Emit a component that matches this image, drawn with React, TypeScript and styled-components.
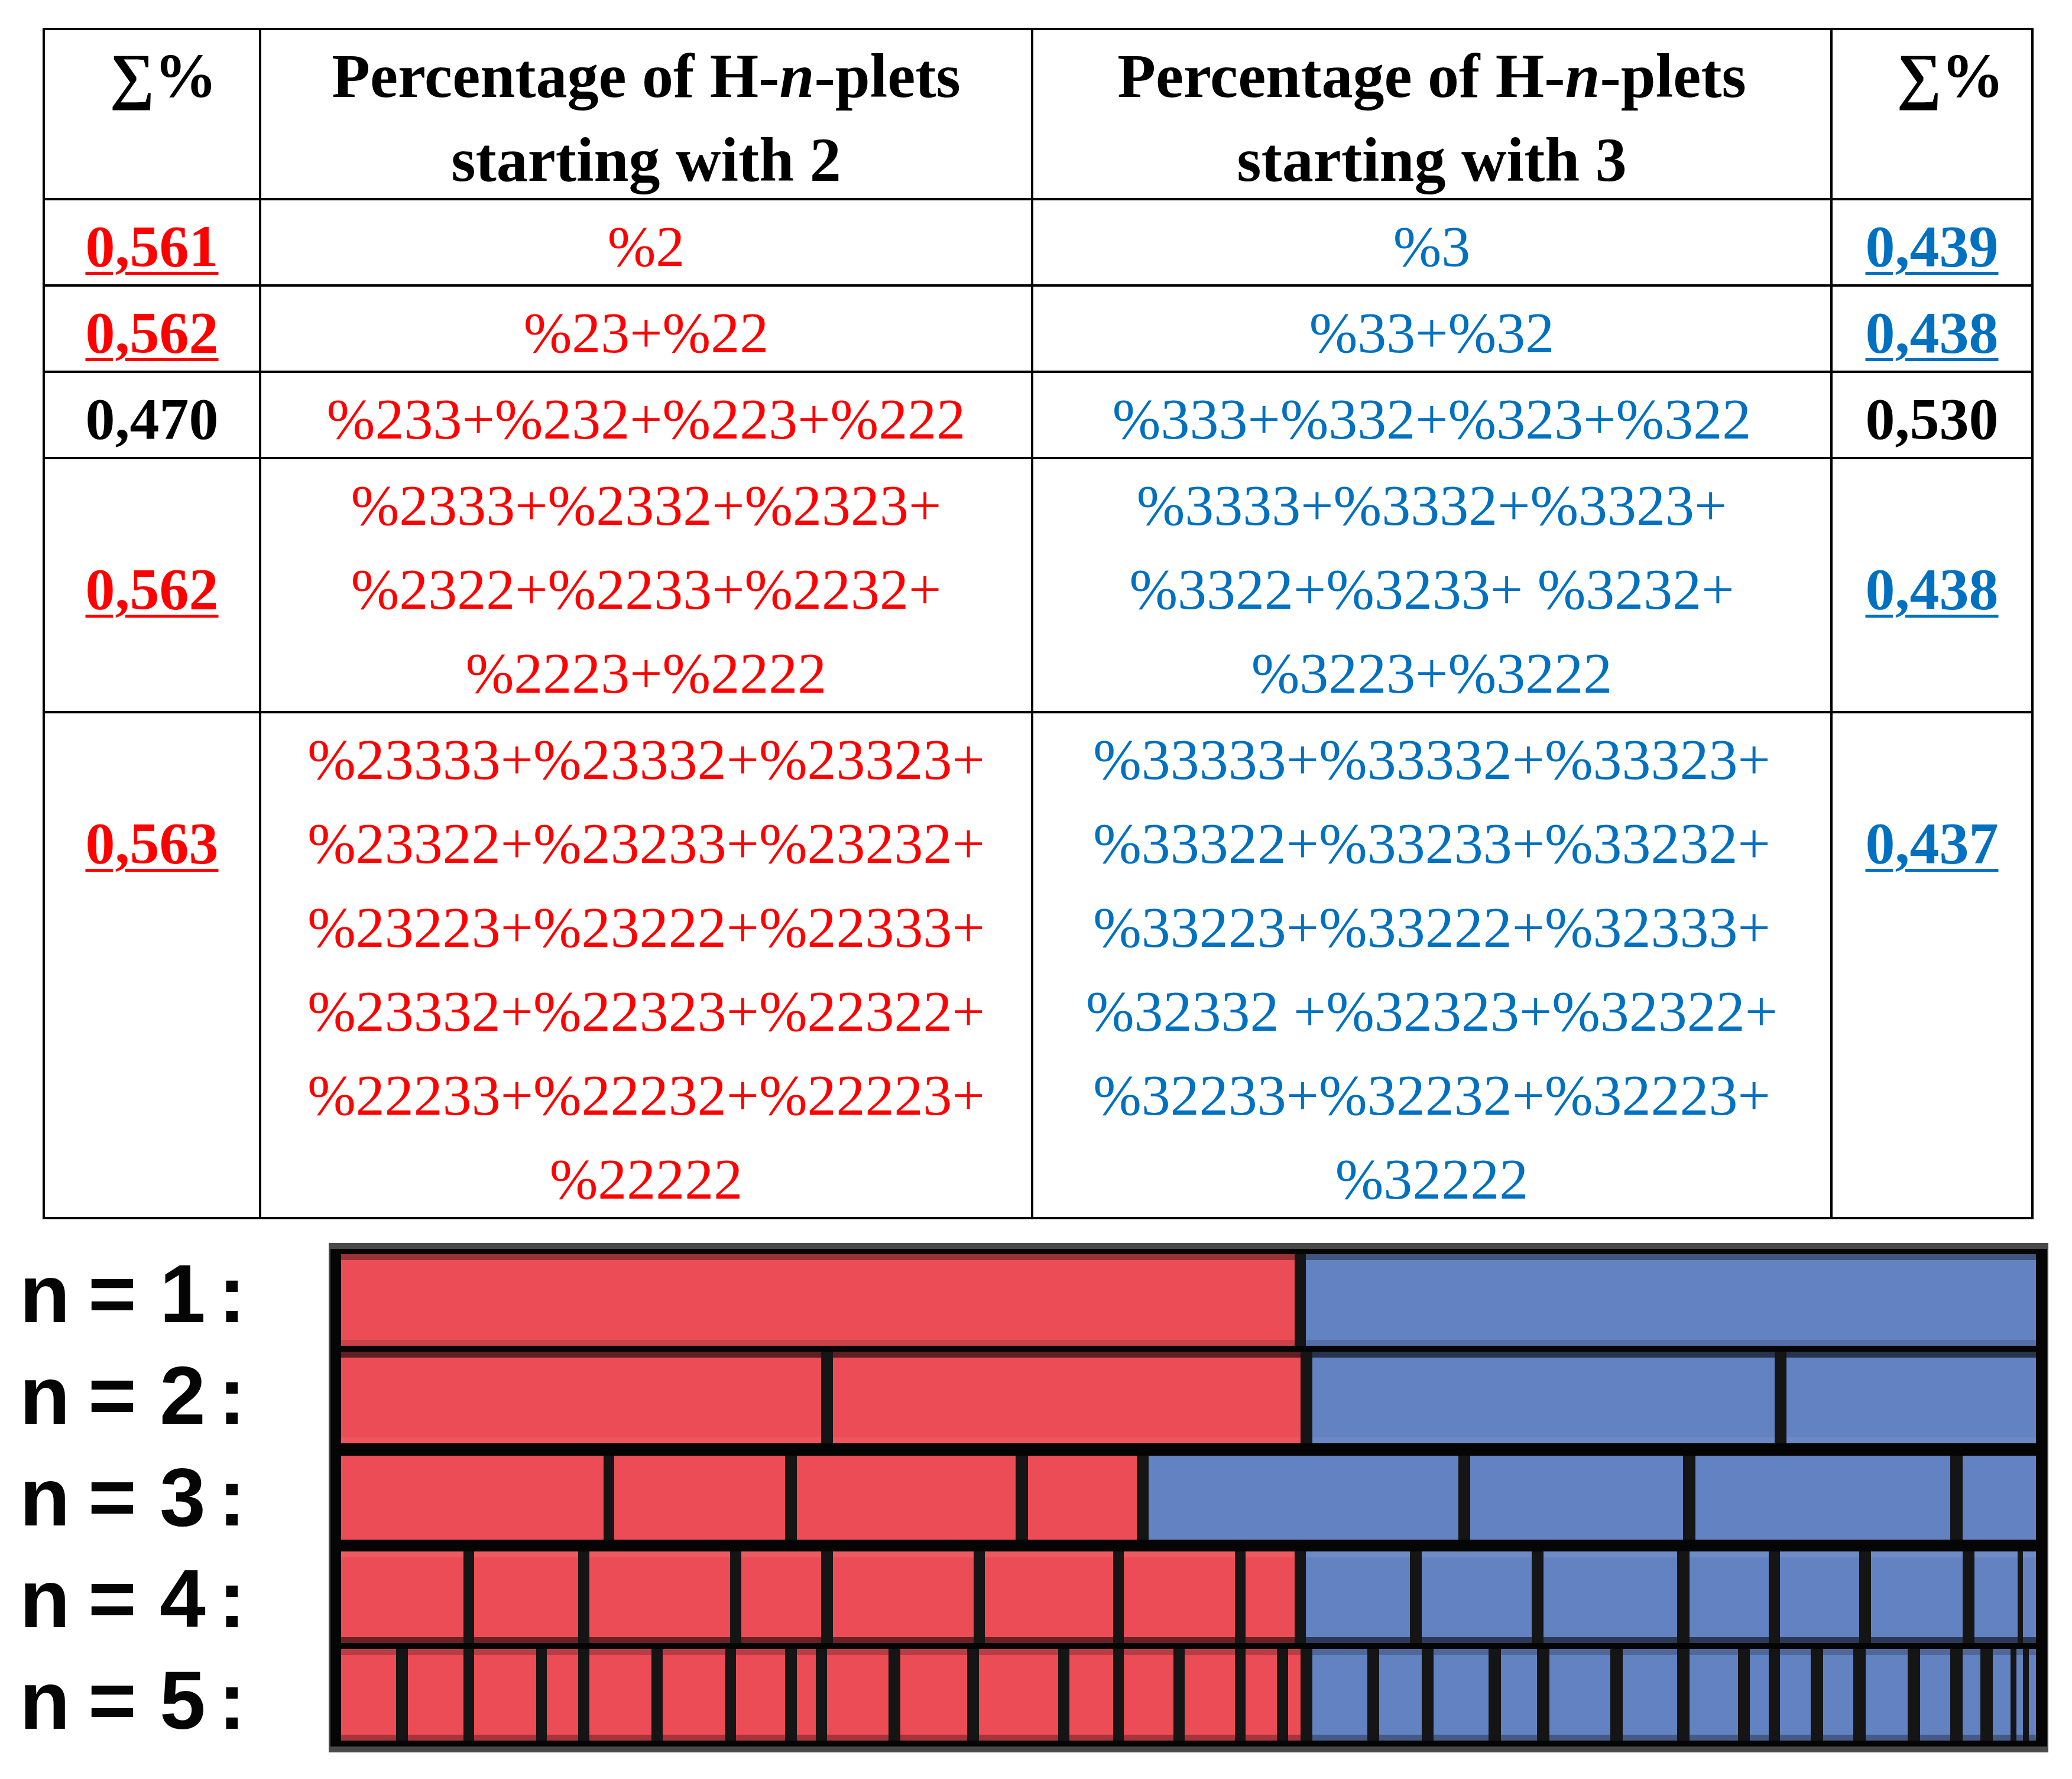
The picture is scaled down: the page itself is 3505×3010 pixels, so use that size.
import React from "react";
import styled, { createGlobalStyle } from "styled-components";

const RED = "#ff0000";
const BLUE = "#0070c0";
const BAR_RED = "#ec4c55";
const BAR_BLUE = "#6382c2";
const LINE = 142;

interface Total {
  value: string;
  color: string;
  underline?: boolean;
}

interface TableRow {
  left: Total;
  right: Total;
  twos: string[];
  threes: string[];
  lead?: number;
}

const rows: TableRow[] = [
  {
    left: { value: "0,561", color: RED, underline: true },
    right: { value: "0,439", color: BLUE, underline: true },
    twos: ["%2"],
    threes: ["%3"],
  },
  {
    left: { value: "0,562", color: RED, underline: true },
    right: { value: "0,438", color: BLUE, underline: true },
    twos: ["%23+%22"],
    threes: ["%33+%32"],
  },
  {
    left: { value: "0,470", color: "#000" },
    right: { value: "0,530", color: "#000" },
    twos: ["%233+%232+%223+%222"],
    threes: ["%333+%332+%323+%322"],
  },
  {
    left: { value: "0,562", color: RED, underline: true },
    right: { value: "0,438", color: BLUE, underline: true },
    twos: ["%2333+%2332+%2323+", "%2322+%2233+%2232+", "%2223+%2222"],
    threes: ["%3333+%3332+%3323+", "%3322+%3233+ %3232+", "%3223+%3222"],
    lead: 1,
  },
  {
    left: { value: "0,563", color: RED, underline: true },
    right: { value: "0,437", color: BLUE, underline: true },
    twos: [
      "%23333+%23332+%23323+",
      "%23322+%23233+%23232+",
      "%23223+%23222+%22333+",
      "%23332+%22323+%22322+",
      "%22233+%22232+%22223+",
      "%22222",
    ],
    threes: [
      "%33333+%33332+%33323+",
      "%33322+%33233+%33232+",
      "%33223+%33222+%32333+",
      "%32332 +%32323+%32322+",
      "%32233+%32232+%32223+",
      "%32222",
    ],
    lead: 1,
  },
];

// bar chart: segment edges in page pixels, inner area starts at 577
type Seg = [number, number, "r" | "b"];

interface BarRowData {
  height: number;
  sep: number;
  top: string;
  bottom: string;
  segs: Seg[];
}

const r = (a: number, b: number): Seg => [a, b, "r"];
const b = (a: number, c: number): Seg => [a, c, "b"];

const bars: BarRowData[] = [
  {
    height: 155,
    sep: 0,
    top: "rgba(0,0,0,0.35)",
    bottom: "rgba(0,0,0,0.14)",
    segs: [r(577, 2190), b(2209, 3444)],
  },
  {
    height: 155,
    sep: 10,
    top: "rgba(0,0,0,0.6)",
    bottom: "rgba(255,255,255,0.06)",
    segs: [r(577, 1389), r(1409, 2200), b(2220, 3002), b(3022, 3444)],
  },
  {
    height: 142,
    sep: 21,
    top: "rgba(0,0,0,0)",
    bottom: "rgba(0,0,0,0)",
    segs: [
      r(577, 1021), r(1039, 1328), r(1348, 1718), r(1739, 1923),
      b(1943, 2467), b(2487, 2847), b(2868, 3299), b(3320, 3444),
    ],
  },
  {
    height: 155,
    sep: 20,
    top: "rgba(255,255,255,0.08)",
    bottom: "rgba(0,0,0,0.55)",
    segs: [
      r(577, 784), r(802, 978), r(997, 1235), r(1254, 1389),
      r(1409, 1647), r(1666, 1883), r(1901, 2089), r(2107, 2190),
      b(2209, 2385), b(2405, 2591), b(2611, 2837), b(2858, 2992),
      b(3011, 3145), b(3165, 3320), b(3340, 3413), b(3422, 3444),
    ],
  },
  {
    height: 155,
    sep: 10,
    top: "rgba(0,0,0,0.2)",
    bottom: "rgba(0,0,0,0.3)",
    segs: [
      r(577, 670), r(690, 784), r(802, 907), r(925, 978), r(997, 1102),
      r(1121, 1227), r(1245, 1328), r(1348, 1380), r(1399, 1503),
      r(1523, 1636), r(1656, 1790), r(1809, 1883), r(1901, 1985),
      r(2004, 2089), r(2107, 2160), r(2179, 2200),
      b(2220, 2313), b(2333, 2405), b(2425, 2518), b(2539, 2600),
      b(2621, 2724), b(2745, 2837), b(2858, 2940), b(2960, 2992),
      b(3011, 3063), b(3084, 3135), b(3156, 3227), b(3248, 3299),
      b(3320, 3350), b(3371, 3401), b(3411, 3422), b(3432, 3444),
    ],
  },
];

const GlobalStyle = createGlobalStyle`
  html, body {
    margin: 0;
    padding: 0;
    background: #fff;
  }
`;

const Page = styled.div`
  width: 3505px;
  height: 3010px;
  box-sizing: border-box;
  padding-top: 47px;
  background: #fff;
  overflow: hidden;
`;

const Table = styled.div`
  display: grid;
  grid-template-columns: 362px 1302px 1348px 336px;
  grid-template-rows: ${LINE * 2}px ${LINE}px ${LINE}px ${LINE}px ${LINE * 3}px ${LINE * 6}px;
  gap: 4px;
  padding: 4px;
  margin-left: 72px;
  width: fit-content;
  background: #000;
  font-family: "Liberation Serif", "DejaVu Serif", serif;
`;

const Cell = styled.div<{ $lead?: number }>`
  background: #fff;
  box-sizing: border-box;
  padding-top: ${(p) => 7 + (p.$lead || 0) * LINE}px;
  line-height: ${LINE}px;
  text-align: center;
  white-space: nowrap;
`;

const HeadCell = styled(Cell)`
  font-size: 106px;
  font-weight: 700;
  color: #000;
`;

const SumHead = styled(HeadCell)<{ $pad: number }>`
  text-align: right;
  padding-right: ${(p) => p.$pad}px;
`;

const TotalText = styled.span<{ $color: string; $underline?: boolean }>`
  font-size: 100px;
  font-weight: 700;
  color: ${(p) => p.$color};
  text-decoration: ${(p) => (p.$underline ? "underline" : "none")};
  text-decoration-thickness: 5px;
  text-underline-offset: 10px;
`;

const Formula = styled(Cell)<{ $color: string }>`
  font-size: 98px;
  color: ${(p) => p.$color};
`;

const FormulaLine = styled.div`
  height: ${LINE}px;
`;

const Figure = styled.div`
  display: flex;
  align-items: flex-start;
  margin-top: 40px;
  padding-left: 33px;
`;

const Labels = styled.div`
  width: 523px;
  display: flex;
  flex-direction: column;
  font-family: "Liberation Sans", Arial, sans-serif;
  font-weight: 700;
  font-size: 140px;
  line-height: 172px;
  color: #050505;
`;

const Label = styled.div`
  display: grid;
  grid-template-columns: 116px 121px 99px auto;
  height: 172px;
`;

const Frame = styled.div`
  box-sizing: border-box;
  width: 2909px;
  border-style: solid;
  border-color: #4a4a4a;
  border-width: 10px 2px 10px 3px;
  padding: 9px 19px 10px 18px;
  background: #050505;
  display: flex;
  flex-direction: column;
`;

const BarRow = styled.div<{ $h: number; $sep: number }>`
  display: flex;
  height: ${(p) => p.$h}px;
  margin-top: ${(p) => p.$sep}px;
  background: #151515;
`;

const Block = styled.div<{ $kind: "r" | "b"; $top: string; $bottom: string }>`
  flex: none;
  height: 100%;
  background: ${(p) => (p.$kind === "r" ? BAR_RED : BAR_BLUE)};
  box-shadow: inset 0 10px 0 ${(p) => p.$top}, inset 0 -10px 0 ${(p) => p.$bottom};
`;

function Bar({ row }: { row: BarRowData }) {
  let prev = 577;
  return (
    <BarRow $h={row.height} $sep={row.sep}>
      {row.segs.map(([start, end, kind], i) => {
        const style = { marginLeft: start - prev, width: end - start };
        prev = end;
        return <Block key={i} $kind={kind} $top={row.top} $bottom={row.bottom} style={style} />;
      })}
    </BarRow>
  );
}

export default function App() {
  return (
    <Page>
      <GlobalStyle />
      <Table>
        <SumHead $pad={71}>∑%</SumHead>
        <HeadCell>
          Percentage of H-<i>n</i>-plets
          <br />
          starting with 2
        </HeadCell>
        <HeadCell>
          Percentage of H-<i>n</i>-plets
          <br />
          starting with 3
        </HeadCell>
        <SumHead $pad={46}>∑%</SumHead>

        {rows.map((row, i) => (
          <React.Fragment key={i}>
            <Cell $lead={row.lead}>
              <TotalText $color={row.left.color} $underline={row.left.underline}>
                {row.left.value}
              </TotalText>
            </Cell>
            <Formula $color={RED}>
              {row.twos.map((l, j) => (
                <FormulaLine key={j}>{l}</FormulaLine>
              ))}
            </Formula>
            <Formula $color={BLUE}>
              {row.threes.map((l, j) => (
                <FormulaLine key={j}>{l}</FormulaLine>
              ))}
            </Formula>
            <Cell $lead={row.lead}>
              <TotalText $color={row.right.color} $underline={row.right.underline}>
                {row.right.value}
              </TotalText>
            </Cell>
          </React.Fragment>
        ))}
      </Table>

      <Figure>
        <Labels>
          {[1, 2, 3, 4, 5].map((n) => (
            <Label key={n}>
              <span>n</span>
              <span>=</span>
              <span>{n}</span>
              <span>:</span>
            </Label>
          ))}
        </Labels>
        <Frame>
          {bars.map((row, i) => (
            <Bar key={i} row={row} />
          ))}
        </Frame>
      </Figure>
    </Page>
  );
}
